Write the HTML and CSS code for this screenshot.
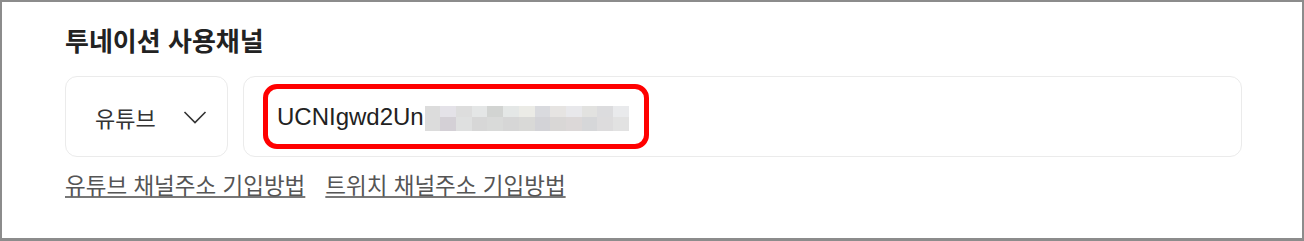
FILE: index.html
```html
<!DOCTYPE html>
<html lang="ko">
<head>
<meta charset="utf-8">
<title>투네이션 사용채널</title>
<link rel="stylesheet" href="styles.css">
</head>
<body>
<div class="frame">
  <h2 class="title">투네이션 사용채널</h2>
  <div class="row">
    <div class="select">
      <span class="select-label">유튜브</span>
      <svg class="chevron" width="24" height="13" viewBox="0 0 24 13" aria-hidden="true">
        <path d="M1.5 1 L12 11.5 L22.5 1" fill="none" stroke="#333" stroke-width="1.6"/>
      </svg>
    </div>
    <div class="input">
      <div class="highlight">
        <span class="value">UCNIgwd2Un</span>
        <span class="mosaic">
          <i style="background:#dcdcdc"></i><i style="background:#e4e2e8"></i><i style="background:#dddddd"></i><i style="background:#e4e6e6"></i><i style="background:#d2d4d2"></i><i style="background:#e4e7e6"></i><i style="background:#ebebe6"></i><i style="background:#d9dade"></i><i style="background:#e6e4e2"></i><i style="background:#e8e8eb"></i><i style="background:#e2e2e0"></i><i style="background:#dcdcde"></i><i style="background:#e9eaec"></i>
          <i style="background:#dcdcdc"></i><i style="background:#d4d0d6"></i><i style="background:#dfe0e0"></i><i style="background:#d7d7d7"></i><i style="background:#d9dad9"></i><i style="background:#d6d6d6"></i><i style="background:#d9d9d7"></i><i style="background:#d3d3d7"></i><i style="background:#d9d7d6"></i><i style="background:#dcd8d8"></i><i style="background:#d6d7d9"></i><i style="background:#dddcdd"></i><i style="background:#e2e2e2"></i>
        </span>
      </div>
    </div>
  </div>
  <div class="links">
    <a class="link" href="#">유튜브 채널주소 기입방법</a>
    <a class="link" href="#">트위치 채널주소 기입방법</a>
  </div>
</div>
</body>
</html>
```

FILE: styles.css
```css
* { box-sizing: border-box; }
html, body { margin: 0; padding: 0; background: #fff; }
body { font-family: "Noto Sans CJK KR", "Noto Sans", sans-serif; }

.frame {
  width: 1304px;
  height: 241px;
  border: 2px solid #8c8c8c;
  border-bottom-width: 3px;
  padding: 0 60px 0 63px;
  background: #fff;
}

.title {
  margin: 0;
  padding-top: 21px;
  font-size: 26px;
  line-height: 34px;
  font-weight: 700;
  color: #222;
}

.row {
  display: flex;
  gap: 15px;
  margin-top: 19px;
  height: 81px;
}

.select {
  width: 163px;
  height: 81px;
  border: 1px solid #ebebeb;
  border-radius: 12px;
  display: flex;
  align-items: center;
  justify-content: space-between;
  padding: 0 20px 0 29px;
}

.select-label {
  font-size: 22px;
  color: #333;
  line-height: 26px;
}

.chevron { display: block; margin-top: 1px; }

.input {
  flex: 1;
  height: 81px;
  border: 1px solid #ebebeb;
  border-radius: 12px;
  padding: 7px 0 0 19px;
}

.highlight {
  width: 386px;
  height: 65px;
  border: 5px solid #ff0000;
  border-radius: 14px;
  display: flex;
  align-items: center;
  padding-left: 9px;
}

.value {
  font-family: "Liberation Sans", Arial, sans-serif;
  font-size: 24px;
  color: #222;
  line-height: 28px;
}

.mosaic {
  display: grid;
  grid-template-columns: repeat(13, 15.7px);
  grid-template-rows: 11px 14px;
  margin-left: 1px;
  margin-top: 4px;
}
.mosaic i { display: block; }

.links {
  display: flex;
  gap: 20px;
  margin-top: 13px;
}

.link {
  font-size: 22.5px;
  line-height: 28px;
  color: #555;
  text-decoration: underline;
  text-decoration-color: #777;
  text-underline-offset: 2px;
}
```
